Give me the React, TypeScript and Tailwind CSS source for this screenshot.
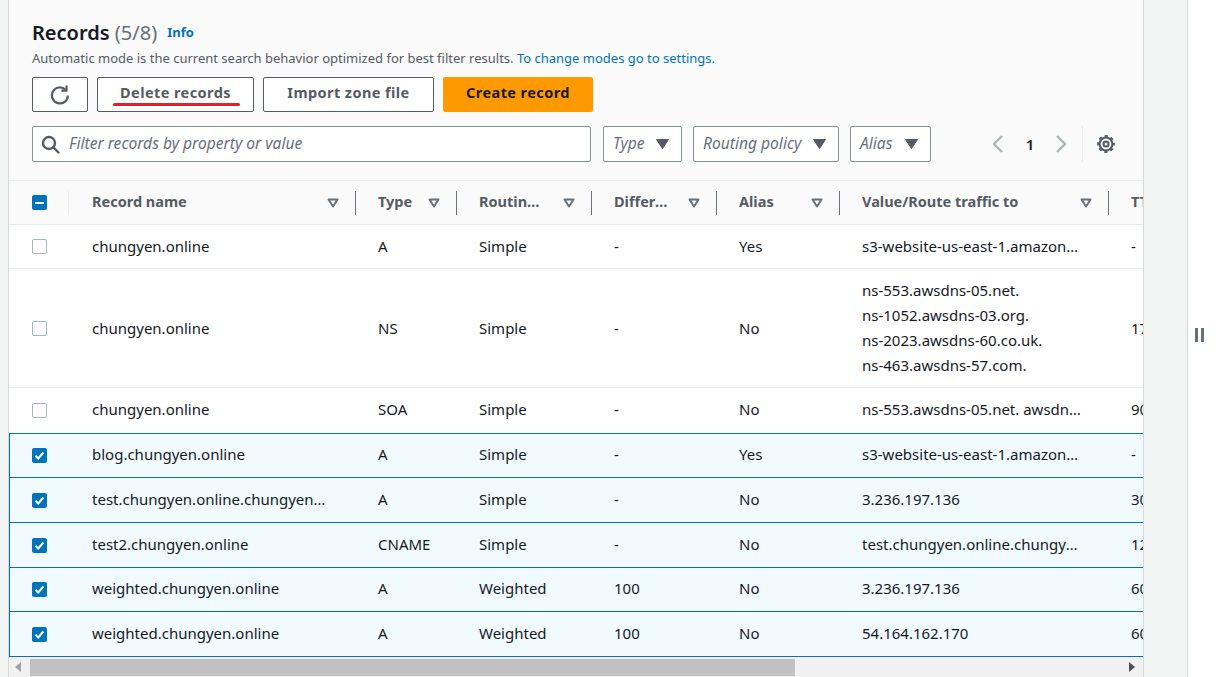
import { JSX } from 'react'
import { clsx } from 'clsx'

const FONT = 'font-["Noto_Sans",sans-serif]'

type Row = {
  name: string
  type: string
  routing: string
  diff: string
  alias: string
  value: string[]
  ttl: string
  checked?: boolean
  height: string
  lift?: boolean
}

const rows: Row[] = [
  { name: 'chungyen.online', type: 'A', routing: 'Simple', diff: '-', alias: 'Yes', value: ['s3-website-us-east-1.amazonaws.com.'], ttl: '-', height: 'h-[44px]' },
  {
    name: 'chungyen.online',
    type: 'NS',
    routing: 'Simple',
    diff: '-',
    alias: 'No',
    value: ['ns-553.awsdns-05.net.', 'ns-1052.awsdns-03.org.', 'ns-2023.awsdns-60.co.uk.', 'ns-463.awsdns-57.com.'],
    ttl: '172800',
    height: 'h-[119px]'
  },
  { name: 'chungyen.online', type: 'SOA', routing: 'Simple', diff: '-', alias: 'No', value: ['ns-553.awsdns-05.net. awsdns-hostmaster.amazon.com.'], ttl: '900', height: 'h-[46px]', lift: true },
  { name: 'blog.chungyen.online', type: 'A', routing: 'Simple', diff: '-', alias: 'Yes', value: ['s3-website-us-east-1.amazonaws.com.'], ttl: '-', checked: true, height: 'h-[44px]', lift: true },
  { name: 'test.chungyen.online.chungyen.online', type: 'A', routing: 'Simple', diff: '-', alias: 'No', value: ['3.236.197.136'], ttl: '300', checked: true, height: 'h-[45px]', lift: true },
  { name: 'test2.chungyen.online', type: 'CNAME', routing: 'Simple', diff: '-', alias: 'No', value: ['test.chungyen.online.chungyen.online'], ttl: '120', checked: true, height: 'h-[45px]', lift: true },
  { name: 'weighted.chungyen.online', type: 'A', routing: 'Weighted', diff: '100', alias: 'No', value: ['3.236.197.136'], ttl: '60', checked: true, height: 'h-[44px]', lift: true },
  { name: 'weighted.chungyen.online', type: 'A', routing: 'Weighted', diff: '100', alias: 'No', value: ['54.164.162.170'], ttl: '60', checked: true, height: 'h-[45px]', lift: true }
]

function SortIcon(): JSX.Element {
  return (
    <svg width="12" height="10" viewBox="0 0 12 10" className="shrink-0">
      <path d="M1.5 1.5h9L6 8.5z" fill="none" stroke="#687078" strokeWidth="2" strokeLinejoin="round" />
    </svg>
  )
}

function Caret(): JSX.Element {
  return (
    <svg width="13" height="10" viewBox="0 0 13 10" className="shrink-0">
      <path d="M0.5 0.5h12L6.5 9.5z" fill="#545b64" stroke="#545b64" strokeLinejoin="round" />
    </svg>
  )
}

function RefreshIcon(): JSX.Element {
  return (
    <svg width="20" height="20" viewBox="0 0 20 20" fill="none" stroke="#545b64" strokeWidth="2.2">
      <path d="M15.4 4.6A8 8 0 1 0 17.9 10.5" />
      <path d="M16.5 0.5V5.6H11.4" />
    </svg>
  )
}

function SearchIcon(): JSX.Element {
  return (
    <svg width="19" height="19" viewBox="0 0 19 19" fill="none" stroke="#545b64" strokeWidth="2.4" className="shrink-0">
      <circle cx="8" cy="8" r="6" />
      <path d="M12.4 12.4L17.5 17.5" strokeLinecap="round" />
    </svg>
  )
}

function GearIcon(): JSX.Element {
  return (
    <svg width="18" height="18" viewBox="0 0 18 18" fill="none" stroke="#545b64" strokeWidth="2">
      <circle cx="9" cy="9" r="6.4" />
      <circle cx="9" cy="9" r="7.9" strokeDasharray="3.2 3" strokeDashoffset="1.6" />
      <circle cx="9" cy="9" r="2.5" />
    </svg>
  )
}

function Chevron({ right }: { right?: boolean }): JSX.Element {
  return (
    <svg width="10" height="18" viewBox="0 0 10 18" fill="none" stroke="#aab7b8" strokeWidth="2.4">
      <path d={right ? 'M1 1l8 8-8 8' : 'M9 1L1 9l8 8'} />
    </svg>
  )
}

function Checkbox({ checked }: { checked?: boolean }): JSX.Element {
  if (checked) {
    return (
      <span className="flex h-[15px] w-[15px] items-center justify-center rounded-[2px] bg-[#0073bb]">
        <svg width="11" height="11" viewBox="0 0 11 11">
          <path d="M1.5 5.8l2.7 2.7 5.2-6" fill="none" stroke="#fff" strokeWidth="2" />
        </svg>
      </span>
    )
  }
  return <span className="block h-[15px] w-[15px] rounded-[2px] border border-[#aab7b8] bg-white" />
}

function ActionButton({ text, width }: { text: string; width: string }): JSX.Element {
  return (
    <button className={clsx('h-[35px] rounded-[2px] border border-[#545b64] bg-white pb-[3px] text-[14.5px] font-bold tracking-[0.42px] text-[#545b64]', width)}>
      {text}
    </button>
  )
}

function SelectBox({ text, width }: { text: string; width: string }): JSX.Element {
  return (
    <div className={clsx('flex h-[36px] items-center justify-between rounded-[2px] border border-[#879596] bg-white pl-[9px] pr-[12px] text-[15.6px] italic text-[#687078]', width)}>
      <span>{text}</span>
      <Caret />
    </div>
  )
}

function HeaderCell({ text, width, gap = 'gap-[18px]', last }: { text: string; width: string; gap?: string; last?: boolean }): JSX.Element {
  return (
    <th className={clsx('border-b border-t border-[#eaeded] p-0 text-left', width)}>
      <div className={clsx('-mr-px flex h-[24px] items-center justify-between pl-[23px] pr-[16px]', gap, !last && 'border-r border-[#687078]')}>
        <span className="truncate pb-[2px] text-[14.5px] font-bold text-[#545b64]">{text}</span>
        {!last && <SortIcon />}
      </div>
    </th>
  )
}

export default function App(): JSX.Element {
  return (
    <div className={clsx('flex h-screen w-full overflow-hidden bg-white', FONT)}>
      <div className="w-[9px] shrink-0 border-r border-[#d5dbdb] bg-[#f2f3f3]" />
      <main className="flex w-[1134px] shrink-0 flex-col overflow-hidden bg-[#fafafa]">
        <div className="px-[23px] pt-[22px]">
          <div className="flex h-[22px] items-center gap-[10px]">
            <h1 className="text-[20px] font-semibold leading-[22px] text-[#16191f]">
              Records <span className="font-normal text-[#687078]">(5/8)</span>
            </h1>
            <span className="text-[13px] font-bold text-[#0073bb]">Info</span>
          </div>
          <p className="mt-[4px] text-[13px] leading-[20px] text-[#545b64]">
            Automatic mode is the current search behavior optimized for best filter results.{' '}
            <span className="text-[#0073bb]">To change modes go to settings.</span>
          </p>
          <div className="mt-[9px] flex gap-[9px]">
            <button className="flex h-[35px] w-[56px] items-center justify-center rounded-[2px] border border-[#545b64] bg-white">
              <RefreshIcon />
            </button>
            <div className="relative flex">
              <ActionButton text="Delete records" width="w-[157px]" />
              <div className="absolute left-[16px] top-[26px] h-[3px] w-[127px] rounded-full bg-[#e0202a]" />
            </div>
            <ActionButton text="Import zone file" width="w-[171px]" />
            <button className="h-[35px] w-[150px] rounded-[2px] bg-[#ff9900] pb-[3px] text-[14.5px] font-bold tracking-[0.42px] text-[#16191f]">
              Create record
            </button>
          </div>
          <div className="mt-[14px] flex items-center">
            <div className="flex h-[36px] w-[559px] items-center gap-[9px] rounded-[2px] border border-[#879596] bg-white pl-[8px] text-[15.6px] italic text-[#687078]">
              <SearchIcon />
              <span>Filter records by property or value</span>
            </div>
            <div className="ml-[12px] flex gap-[11px]">
              <SelectBox text="Type" width="w-[79px]" />
              <SelectBox text="Routing policy" width="w-[146px]" />
              <SelectBox text="Alias" width="w-[81px]" />
            </div>
            <div className="ml-[62px] flex items-center">
              <Chevron />
              <span className="w-[53px] pl-[1px] text-center text-[15px] font-semibold text-[#16191f]">1</span>
              <Chevron right />
            </div>
            <div className="ml-[16px] flex h-[36px] items-center border-l border-[#eaeded] pl-[14px]">
              <GearIcon />
            </div>
          </div>
        </div>
        <div className="mt-[18px] min-h-0 flex-1 overflow-hidden">
          <table className="w-[1240px] table-fixed border-separate border-spacing-0 text-[15px] text-[#16191f]">
            <thead>
              <tr className="h-[45px] bg-[#fafafa]">
                <th className="w-[60px] border-b border-t border-[#eaeded] p-0 pl-[23px] text-left">
                  <span className="flex h-[24px] items-center justify-between border-r border-[#eaeded]">
                    <span className="flex h-[15px] w-[15px] items-center justify-center rounded-[2px] bg-[#0073bb]">
                      <span className="h-[2px] w-[9px] bg-white" />
                    </span>
                  </span>
                </th>
                <HeaderCell text="Record name" width="w-[286px]" />
                <HeaderCell text="Type" width="w-[101px]" gap="gap-[13px]" />
                <HeaderCell text="Routing policy" width="w-[135px]" />
                <HeaderCell text="Differentiator" width="w-[125px]" />
                <HeaderCell text="Alias" width="w-[123px]" />
                <HeaderCell text="Value/Route traffic to" width="w-[269px]" />
                <HeaderCell text="TTL (seconds)" width="w-[141px]" last />
              </tr>
            </thead>
            <tbody>
              {rows.map((row, i) => {
                const nextChecked = rows[i + 1]?.checked
                const cell = clsx(
                  'truncate p-0',
                  row.checked || nextChecked ? 'border-b border-[#0073bb]' : 'border-b border-[#eaeded]'
                )
                const text = clsx(cell, row.lift && 'pb-[2px]')
                const plain = clsx(text, 'pl-[23px] pr-[24px]')
                return (
                  <tr key={i} className={clsx(row.height, row.checked ? 'bg-[#f1faff]' : 'bg-white')}>
                    <td className={clsx(cell, row.checked ? 'border-l border-l-[#0073bb] pl-[22px]' : 'pl-[23px]')}>
                      <Checkbox checked={row.checked} />
                    </td>
                    <td className={clsx(text, 'pl-[23px] pr-[26px]')}>{row.name}</td>
                    <td className={plain}>{row.type}</td>
                    <td className={plain}>{row.routing}</td>
                    <td className={plain}>{row.diff}</td>
                    <td className={plain}>{row.alias}</td>
                    <td className={plain}>
                      {row.value.map((v) => (
                        <div key={v} className="truncate leading-[25px]">
                          {v}
                        </div>
                      ))}
                    </td>
                    <td className={plain}>{row.ttl}</td>
                  </tr>
                )
              })}
            </tbody>
          </table>
        </div>
        <div className="flex h-[20px] shrink-0 items-center bg-[#f1f1f1]">
          <span className="ml-[6px] h-0 w-0 border-y-[5px] border-r-[6px] border-y-transparent border-r-[#a3a3a3]" />
          <div className="ml-[9px] h-[17px] w-[765px] bg-[#c1c1c1]" />
          <span className="ml-auto mr-[8px] h-0 w-0 border-y-[5px] border-l-[6px] border-y-transparent border-l-[#505050]" />
        </div>
      </main>
      <div className="w-[45px] shrink-0 border-l border-r border-[#d5dbdb] bg-[#f2f3f3]" />
      <div className="flex flex-1 items-center pb-[7px] pl-[7px]">
        <span className="flex gap-[3px]">
          <span className="h-[14px] w-[3px] bg-[#687078]" />
          <span className="h-[14px] w-[3px] bg-[#687078]" />
        </span>
      </div>
    </div>
  )
}
